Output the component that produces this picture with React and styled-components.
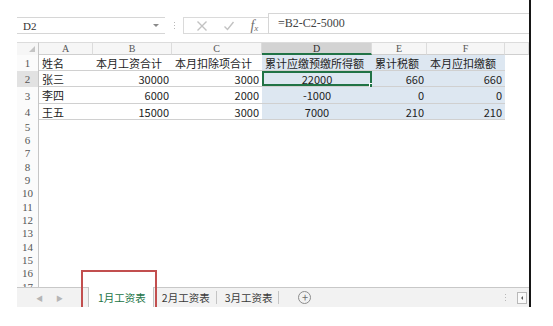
import React from 'react'
import styled, { createGlobalStyle } from 'styled-components'

const GlobalStyle = createGlobalStyle`
  html, body {
    margin: 0;
    padding: 0;
    background: #ffffff;
  }
  body {
    font-family: 'Noto Sans CJK SC', 'Noto Sans', sans-serif;
  }
`

const green = '#217346'
const blueFill = '#dde7f1'
const gridLine = '#d0d0d0'
const serif = `'Liberation Serif', 'Noto Sans CJK SC', serif`
const cjk = `'Noto Sans CJK SC', 'Noto Sans', sans-serif`

const columns = [
  { key: 'A', width: 54 },
  { key: 'B', width: 79 },
  { key: 'C', width: 90 },
  { key: 'D', width: 110 },
  { key: 'E', width: 55 },
  { key: 'F', width: 78 },
  { key: 'G', width: 24, hidden: true },
]

const dataRows = [
  { n: 1, h: 16, cells: ['姓名', '本月工资合计', '本月扣除项合计', '累计应缴预缴所得额', '累计税额', '本月应扣缴额'], header: true },
  { n: 2, h: 16, cells: ['张三', '30000', '3000', '22000', '660', '660'] },
  { n: 3, h: 17, cells: ['李四', '6000', '2000', '-1000', '0', '0'] },
  { n: 4, h: 16, cells: ['王五', '15000', '3000', '7000', '210', '210'] },
]

const emptyRows = [5, 6, 7, 8, 9, 10, 11, 12, 13, 14, 15, 16, 17]

const Window = styled.div`
  margin-left: 17px;
  width: 512px;
  height: 307px;
  border-right: 2px solid #161616;
  display: flex;
  flex-direction: column;
  overflow: hidden;
`

const FormulaBar = styled.div`
  height: 42px;
  box-sizing: border-box;
  padding-top: 13px;
  display: flex;
  align-items: flex-start;
`

const NameBox = styled.div`
  margin-top: 4px;
  width: 148px;
  height: 17px;
  box-sizing: border-box;
  border-top: 1px solid #d6d6d6;
  border-bottom: 1px solid #d6d6d6;
  display: flex;
  align-items: center;
  justify-content: space-between;
  padding: 0 6px 0 6px;
  font-family: ${serif};
  font-size: 11px;
  color: #333;
`

const DropArrow = styled.span`
  width: 0;
  height: 0;
  border-left: 3px solid transparent;
  border-right: 3px solid transparent;
  border-top: 3px solid #8a8a8a;
`

const Grip = styled.div`
  margin-top: 4px;
  width: 18px;
  height: 17px;
  display: flex;
  flex-direction: column;
  align-items: center;
  justify-content: center;
  gap: 2px;
  & span {
    width: 1px;
    height: 1px;
    background: #b8b8b8;
  }
`

const FxButtons = styled.div`
  margin-top: 4px;
  width: 85px;
  height: 17px;
  box-sizing: border-box;
  border: 1px solid #dadada;
  border-right: none;
  display: flex;
  align-items: center;
  justify-content: space-around;
  padding: 0 2px 0 4px;
`

const Fx = styled.span`
  font-family: ${serif};
  font-style: italic;
  font-size: 14px;
  color: #6e6e6e;
  line-height: 1;
  & sub {
    font-size: 9px;
    vertical-align: -1px;
  }
`

const FormulaInput = styled.div`
  flex: 1;
  height: 21px;
  box-sizing: border-box;
  border-top: 1px solid #d6d6d6;
  border-bottom: 1px solid #d6d6d6;
  border-left: 1px solid #d6d6d6;
  display: flex;
  align-items: center;
  padding-left: 9px;
  font-family: ${serif};
  font-size: 12px;
  color: #444;
`

const Sheet = styled.div`
  height: 245px;
  overflow: hidden;
  display: flex;
  flex-direction: column;
`

const Row = styled.div`
  display: flex;
  flex: none;
  height: ${(p) => p.h}px;
`

const RowHead = styled.div`
  width: 22px;
  flex: none;
  box-sizing: border-box;
  border-right: 1px solid #c6c6c6;
  background: ${(p) => (p.active ? '#e2e2e2' : '#fbfbfb')};
  display: flex;
  align-items: center;
  justify-content: center;
  font-family: ${serif};
  font-size: 11px;
  color: #555;
`

const Corner = styled(RowHead)`
  position: relative;
  border-top: 1px solid #dcdcdc;
  background: #f6f6f6;
  &::after {
    content: '';
    position: absolute;
    right: 3px;
    bottom: 3px;
    width: 0;
    height: 0;
    border-left: 6px solid transparent;
    border-bottom: 6px solid #c4c4c4;
  }
`

const ColHead = styled.div`
  width: ${(p) => p.w}px;
  flex: none;
  box-sizing: border-box;
  border-top: 1px solid #dcdcdc;
  border-right: 1px solid #dcdcdc;
  border-bottom: ${(p) => (p.active ? `2px solid ${green}` : '1px solid #cfcfcf')};
  background: ${(p) => (p.active ? '#d3d3d3' : '#f6f6f6')};
  display: flex;
  align-items: center;
  justify-content: center;
  font-family: ${serif};
  font-size: 10px;
  color: ${(p) => (p.active ? '#2c2c2c' : '#555')};
`

const Cell = styled.div`
  position: relative;
  width: ${(p) => p.w}px;
  flex: none;
  box-sizing: border-box;
  padding: 0 3px;
  background: ${(p) => (p.fill ? blueFill : 'transparent')};
  border-bottom: ${(p) => (p.line ? `1px solid ${gridLine}` : 'none')};
  display: flex;
  align-items: center;
  justify-content: ${(p) => p.align};
  font-family: ${cjk};
  font-size: 11px;
  color: #1e1e1e;
  white-space: nowrap;
  overflow: visible;
  box-shadow: ${(p) => (p.selected ? `inset 0 0 0 2px ${green}` : 'none')};
  &::after {
    content: '';
    display: ${(p) => (p.selected ? 'block' : 'none')};
    position: absolute;
    right: -3px;
    bottom: -3px;
    width: 4px;
    height: 4px;
    background: ${green};
    border: 1px solid #ffffff;
  }
`

const TabBar = styled.div`
  height: 20px;
  flex: none;
  box-sizing: border-box;
  border-top: 1px solid #c8c8c8;
  background: #f2f2f2;
  display: flex;
  align-items: stretch;
  font-family: ${cjk};
  font-size: 10.5px;
`

const NavArrows = styled.div`
  width: 65px;
  display: flex;
  align-items: center;
  gap: 13px;
  padding-left: 19px;
  box-sizing: border-box;
  color: #b5b5b5;
  font-size: 7px;
`

const Tab = styled.div`
  position: relative;
  padding: ${(p) => (p.active ? '0 7px 0 9px' : '0 6px 0 8px')};
  margin-top: -1px;
  display: flex;
  align-items: center;
  background: ${(p) => (p.active ? '#ffffff' : 'transparent')};
  color: ${(p) => (p.active ? green : '#3a3a3a')};
  border-right: 1px solid #c4c4c4;
  border-left: ${(p) => (p.active ? '1px solid #c4c4c4' : 'none')};
  margin-left: ${(p) => (p.active ? 6 : 0)}px;
  height: 13px;
  align-self: center;
  ${(p) => p.active && `height: 21px; align-self: flex-start;`}
`

const Highlight = styled.div`
  position: absolute;
  left: -8px;
  right: -4px;
  top: -17px;
  bottom: -1px;
  border: 2px solid #c24f4f;
  pointer-events: none;
`

const AddSheet = styled.div`
  margin-left: 19px;
  align-self: center;
  width: 11px;
  height: 11px;
  border: 1px solid #8c8c8c;
  border-radius: 50%;
  display: flex;
  align-items: center;
  justify-content: center;
  color: #6c6c6c;
  font-size: 11px;
  line-height: 1;
`

const Spacer = styled.div`
  flex: 1;
`

const TabDots = styled(Grip)`
  margin: 0 10px 0 0;
  height: auto;
  width: 4px;
  align-self: center;
`

const ScrollBtn = styled.div`
  width: 10px;
  height: 12px;
  margin-right: 2px;
  align-self: center;
  box-sizing: border-box;
  border: 1px solid #b9b9b9;
  background: #fafafa;
  display: flex;
  align-items: center;
  justify-content: center;
  &::before {
    content: '';
    width: 0;
    height: 0;
    border-top: 2px solid transparent;
    border-bottom: 2px solid transparent;
    border-right: 2px solid #555;
  }
`

const CrossIcon = () => (
  <svg width="12" height="12" viewBox="0 0 12 12">
    <path d="M1.5 1.5 L10.5 10.5 M10.5 1.5 L1.5 10.5" stroke="#c2c2c2" strokeWidth="1.4" fill="none" />
  </svg>
)

const CheckIcon = () => (
  <svg width="12" height="12" viewBox="0 0 12 12">
    <path d="M1.5 6.5 L4.5 9.5 L10.5 2" stroke="#c2c2c2" strokeWidth="1.4" fill="none" />
  </svg>
)

const alignFor = (row, i) => {
  if (row.header || i === 0) return 'flex-start'
  if (i === 3) return 'center'
  return 'flex-end'
}

export default function App() {
  return (
    <>
      <GlobalStyle />
      <Window>
        <FormulaBar>
          <NameBox>
            <span>D2</span>
            <DropArrow />
          </NameBox>
          <Grip>
            <span />
            <span />
            <span />
          </Grip>
          <FxButtons>
            <CrossIcon />
            <CheckIcon />
            <Fx>
              f<sub>x</sub>
            </Fx>
          </FxButtons>
          <FormulaInput>=B2-C2-5000</FormulaInput>
        </FormulaBar>

        <Sheet>
          <Row h={13}>
            <Corner />
            {columns.map((c) => (
              <ColHead key={c.key} w={c.width} active={c.key === 'D'}>
                {c.hidden ? '' : c.key}
              </ColHead>
            ))}
          </Row>
          {dataRows.map((row) => (
            <Row key={row.n} h={row.h}>
              <RowHead active={row.n === 2}>{row.n}</RowHead>
              {columns.map((c, i) => (
                <Cell
                  key={c.key}
                  w={c.width}
                  align={alignFor(row, i)}
                  fill={i >= 3 && i <= 5}
                  line={i <= 5}
                  selected={row.n === 2 && c.key === 'D'}
                >
                  {row.cells[i]}
                </Cell>
              ))}
            </Row>
          ))}
          {emptyRows.map((n) => (
            <Row key={n} h={13.33}>
              <RowHead>{n}</RowHead>
            </Row>
          ))}
        </Sheet>

        <TabBar>
          <NavArrows>
            <span>◀</span>
            <span>▶</span>
          </NavArrows>
          <Tab active>
            1月工资表
            <Highlight />
          </Tab>
          <Tab>2月工资表</Tab>
          <Tab>3月工资表</Tab>
          <AddSheet>+</AddSheet>
          <Spacer />
          <TabDots>
            <span />
            <span />
            <span />
          </TabDots>
          <ScrollBtn />
        </TabBar>
      </Window>
    </>
  )
}
